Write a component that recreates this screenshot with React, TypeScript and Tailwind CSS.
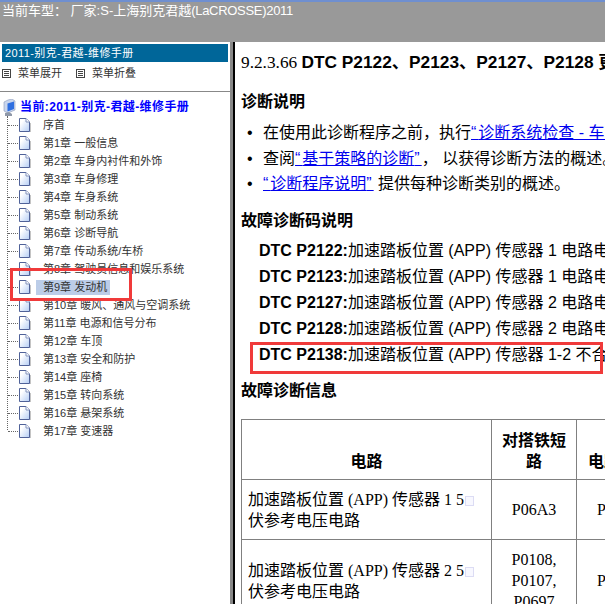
const chapters = [
  "序首",
  "第1章 一般信息",
  "第2章 车身内衬件和外饰",
  "第3章 车身修理",
  "第4章 车身系统",
  "第5章 制动系统",
  "第6章 诊断导航",
  "第7章 传动系统/车桥",
  "第8章 驾驶员信息和娱乐系统",
  "第9章 发动机",
  "第10章 暖风、通风与空调系统",
  "第11章 电源和信号分布",
  "第12章 车顶",
  "第13章 安全和防护",
  "第14章 座椅",
  "第15章 转向系统",
  "第16章 悬架系统",
  "第17章 变速器",
];

const dtcs = [
  ["DTC P2122:", "1 电路电压过低"],
  ["DTC P2123:", "1 电路电压过高"],
  ["DTC P2127:", "2 电路电压过低"],
  ["DTC P2128:", "2 电路电压过高"],
];

const cjk = "font-['Liberation_Sans','Noto_Sans_CJK_SC',sans-serif]";

function PageIcon() {
  return (
    <svg width="13" height="14" viewBox="0 0 13 14" className="shrink-0">
      <defs>
        <linearGradient id="pageFill" x1="0" y1="0" x2="1" y2="1">
          <stop offset="0.25" stopColor="#ffffff" />
          <stop offset="1" stopColor="#b4cdf5" />
        </linearGradient>
      </defs>
      <path d="M12.5 5V14H3" fill="none" stroke="#c4c4c4" />
      <path d="M1.5 .5H8L11.5 4V13.5H1.5Z" fill="url(#pageFill)" stroke="#4f6198" />
      <path d="M8 .5V4H11.5" fill="#fff" stroke="#8494bd" />
    </svg>
  );
}

function MonitorIcon() {
  return (
    <svg width="13" height="17" viewBox="0 0 13 17" className="shrink-0">
      <path d="M1 3L5 1L9 0L12 2V11L5 14L1 12Z" fill="#c9d6ee" stroke="#8a97b5" strokeWidth=".6" />
      <path d="M4.5 4.5L11 2.5V10L4.5 12.5Z" fill="#2f6fe0" />
      <path d="M2 14L6 13L9 15V17H2Z" fill="#8f98a8" />
    </svg>
  );
}

function MenuIcon() {
  return (
    <svg width="9" height="9" viewBox="0 0 9 9" className="shrink-0 block">
      <rect x=".5" y=".5" width="8" height="8" fill="#fff" stroke="#444" />
      <path d="M2 2.5H7M2 4.5H7M2 6.5H7" stroke="#444" />
    </svg>
  );
}

function BadGlyph() {
  return <span className="inline-block ml-[1px] w-[9px] h-[10px] border border-[#dcdcf4] bg-[#f8f8ff] align-[-1px]" />;
}

function Quote({ mark }: { mark: string }) {
  return <span className="tracking-[2px]">{mark}</span>;
}

function Sidebar() {
  return (
    <aside className="relative w-[233px] h-full shrink-0 bg-white border-r-[3px] border-[#888888] overflow-hidden">
      <div className="mx-[2px] mt-[2px] h-[18px] w-[226px] bg-[#006699] text-white text-[11px] tracking-[0.4px] leading-[18px] pl-[3px]">
        2011-别克-君越-维修手册
      </div>
      <div className="flex items-center h-[22px] pl-[2px] text-[11px] text-[#333]">
        <MenuIcon />
        <span className="ml-[7px]">菜单展开</span>
        <span className="ml-[14px]"><MenuIcon /></span>
        <span className="ml-[7px]">菜单折叠</span>
      </div>
      <div className="mt-[7px] h-[1px] bg-[#888]" />
      <div className="flex items-center h-[18px] mt-[6px] pl-[3px] text-[12px] tracking-[0.4px] font-bold text-[#0000ff] whitespace-nowrap">
        <MonitorIcon />
        <span className="ml-[4px]">当前:2011-别克-君越-维修手册</span>
      </div>
      <ul className="ml-[7px] border-l border-dotted border-[#666] h-[314px]">
        {chapters.map((c) => (
          <li key={c} className="flex items-center h-[18px] text-[11px] text-[#333]">
            <span className="w-[10px] border-t border-dotted border-[#666]" />
            <PageIcon />
            <span className={c.startsWith("第9章") ? "ml-[5px] pl-[7px] pr-[3px] h-[15px] leading-[15px] bg-[#bccde8] whitespace-nowrap" : "ml-[12px] whitespace-nowrap"}>
              {c}
            </span>
          </li>
        ))}
      </ul>
      <div className="absolute left-[10px] top-[226px] w-[122px] h-[33px] border-[3px] border-[#f03a3a]" />
    </aside>
  );
}

function Content() {
  return (
    <main className={`relative flex-1 h-full min-w-0 border-l-[2px] border-black bg-white overflow-hidden pl-[6px] pt-[10px] text-[16px] leading-[20px] text-black whitespace-nowrap ${cjk}`}>
      <div className="h-[20px] text-[17.3px]">
        <span className="font-['Liberation_Serif','Noto_Sans_CJK_SC',serif]">9.2.3.66 </span>
        <span className="font-bold">DTC P2122、P2123、P2127、P2128 更</span>
      </div>
      <h3 className="mt-[20px] font-bold h-[20px]">诊断说明</h3>
      <ul className="mt-[11px] flex flex-col gap-[5.5px]">
        <li className="flex">
          <span className="w-[22px] shrink-0 pl-[6px]">•</span>
          <span>在使用此诊断程序之前，执行<a className="text-[#0000ee] underline"><Quote mark="“" />诊断系统检查 - 车辆<Quote mark="”" /></a></span>
        </li>
        <li className="flex">
          <span className="w-[22px] shrink-0 pl-[6px]">•</span>
          <span>查阅<a className="text-[#0000ee] underline"><Quote mark="“" />基于策略的诊断<Quote mark="”" /></a>， 以获得诊断方法的概述。</span>
        </li>
        <li className="flex">
          <span className="w-[22px] shrink-0 pl-[6px]">•</span>
          <span><a className="text-[#0000ee] underline"><Quote mark="“" />诊断程序说明<Quote mark="”" /></a> 提供每种诊断类别的概述。</span>
        </li>
      </ul>
      <h3 className="mt-[17px] font-bold h-[20px]">故障诊断码说明</h3>
      <div className="mt-[10px] pl-[18px] flex flex-col gap-[6px]">
        {dtcs.map(([code, tail]) => (
          <p key={code}><b>{code}</b>加速踏板位置 (APP) 传感器 {tail}</p>
        ))}
        <p><b>DTC P2138:</b>加速踏板位置 (APP) 传感器 1-2 不合理</p>
      </div>
      <h3 className="mt-[16px] font-bold h-[20px]">故障诊断信息</h3>
      <table className="mt-[18px] w-[500px] table-fixed border-collapse leading-[21px] font-['Liberation_Serif','Noto_Sans_CJK_SC',serif]">
        <thead>
          <tr className="h-[60px]">
            <th className="w-[250px] border border-[#808080] align-bottom pb-[7px]">电路</th>
            <th className="w-[85px] border border-[#808080] px-[8px] align-bottom pb-[7px] whitespace-normal">对搭铁短路</th>
            <th className="border border-[#808080] align-bottom pb-[7px] text-left pl-[11px]">电路开路</th>
          </tr>
        </thead>
        <tbody>
          <tr className="h-[60px]">
            <td className="border border-[#808080] px-[6px] whitespace-nowrap">加速踏板位置 (APP) 传感器 1 5<BadGlyph /><br />伏参考电压电路</td>
            <td className="border border-[#808080] text-center">P06A3</td>
            <td className="border border-[#808080] text-left pl-[20px]">P06A3</td>
          </tr>
          <tr className="h-[82px]">
            <td className="border border-[#808080] px-[6px] whitespace-nowrap">加速踏板位置 (APP) 传感器 2 5<BadGlyph /><br />伏参考电压电路</td>
            <td className="border border-[#808080] text-center whitespace-normal">P0108,<br />P0107,<br />P0697</td>
            <td className="border border-[#808080] text-left pl-[20px]">P0697</td>
          </tr>
        </tbody>
      </table>
      <div className="absolute left-[15px] top-[300px] w-[353px] h-[32px] border-[3px] border-[#f03a3a]" />
    </main>
  );
}

export default function App() {
  return (
    <div className={`w-[605px] h-[604px] flex flex-col overflow-hidden bg-white ${cjk}`}>
      <header className="h-[42px] shrink-0 bg-[#999999] border-t-[2px] border-[#6f8fd0] text-white text-[13px] leading-[17px] pl-[2px]">
        当前车型： 厂家:S-上海别克君越<span className="tracking-[-0.3px]">(LaCROSSE)2011</span>
      </header>
      <div className="flex flex-1 min-h-0">
        <Sidebar />
        <Content />
      </div>
    </div>
  );
}
